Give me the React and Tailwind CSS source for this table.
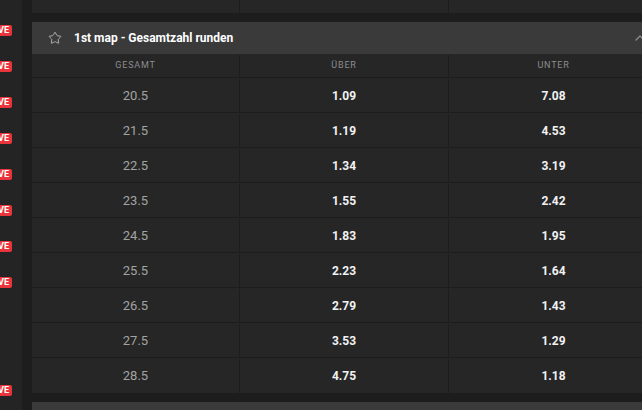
import { Star, ChevronUp } from "lucide-react";

const rows = [
  ["20.5", "1.09", "7.08"],
  ["21.5", "1.19", "4.53"],
  ["22.5", "1.34", "3.19"],
  ["23.5", "1.55", "2.42"],
  ["24.5", "1.83", "1.95"],
  ["25.5", "2.23", "1.64"],
  ["26.5", "2.79", "1.43"],
  ["27.5", "3.53", "1.29"],
  ["28.5", "4.75", "1.18"],
];

const badgeRows = [0, 1, 2, 3, 4, 5, 6, 7, null, null, 10];

function LiveStrip() {
  return (
    <div className="w-[22px] shrink-0 bg-[#242424] overflow-hidden pt-[25px]">
      {badgeRows.map((b, i) => (
        <div key={i} className="h-[36px] flex justify-end pr-[10px]">
          {b !== null && (
            <span className="h-[11px] shrink-0 rounded-[2px] bg-[#e8343d] px-[3px] text-[9px] font-bold leading-[11px] text-white">
              LIVE
            </span>
          )}
        </div>
      ))}
    </div>
  );
}

export default function App() {
  return (
    <div
      className="flex h-[410px] w-[642px] overflow-hidden bg-[#1d1d1d]"
      style={{ fontFamily: "Roboto, 'Liberation Sans', sans-serif" }}
    >
      <LiveStrip />
      <div className="ml-[10px] w-[626px] shrink-0">
        <div className="grid h-[13px] grid-cols-[208px_209px_209px] bg-[#262626]">
          <div className="border-r border-[#1d1d1d]" />
          <div className="border-r border-[#1d1d1d]" />
          <div />
        </div>

        <div className="mt-[9px]">
          <div className="flex h-[32px] items-center bg-[#3a3a3a] pl-[16px] pr-[10px]">
            <Star size={14} strokeWidth={1.6} className="text-[#b5b5b5]" />
            <span className="ml-[12px] text-[12px] font-bold text-white">
              1st map - Gesamtzahl runden
            </span>
            <ChevronUp size={16} strokeWidth={2} className="ml-auto text-[#8a8a8a]" />
          </div>

          <div className="grid h-[24px] grid-cols-[208px_209px_209px] border-b border-[#1d1d1d] bg-[#262626] pt-[1px] text-[9px] tracking-[0.8px] text-[#8d8d8d]">
            <div className="flex items-center justify-center border-r border-[#1d1d1d]">GESAMT</div>
            <div className="flex items-center justify-center border-r border-[#1d1d1d]">ÜBER</div>
            <div className="flex items-center justify-center">UNTER</div>
          </div>

          {rows.map((r, i) => (
            <div
              key={r[0]}
              className={`grid h-[35px] grid-cols-[208px_209px_209px] bg-[#262626] pt-[1px] ${
                i < rows.length - 1 ? "border-b border-[#1d1d1d]" : ""
              }`}
            >
              <div className="flex items-center justify-center border-r border-[#1d1d1d] text-[13px] text-[#a3a3a3]">
                {r[0]}
              </div>
              <div className="flex items-center justify-center border-r border-[#1d1d1d] text-[12px] font-bold text-[#f2f2f2]">
                {r[1]}
              </div>
              <div className="flex items-center justify-center text-[12px] font-bold text-[#f2f2f2]">
                {r[2]}
              </div>
            </div>
          ))}
        </div>

        <div className="mt-[9px] h-[20px] bg-[#3a3a3a]" />
      </div>
    </div>
  );
}
